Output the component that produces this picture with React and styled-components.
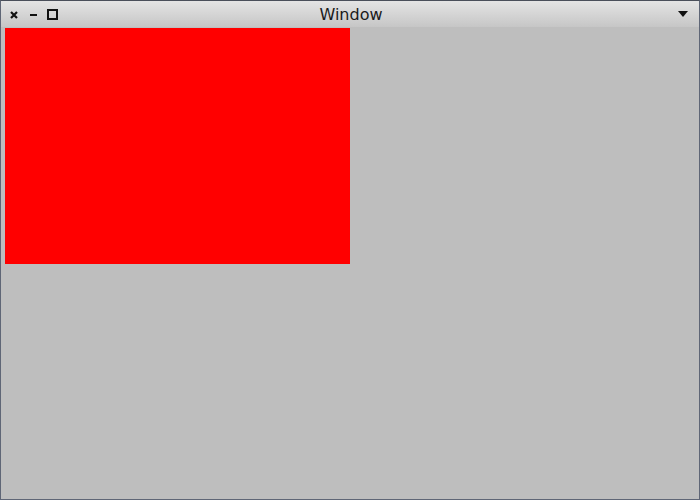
import React from 'react';
import styled, { createGlobalStyle } from 'styled-components';

const Global = createGlobalStyle`
  html, body { margin: 0; padding: 0; background: #bebebe; }
  body { font-family: "DejaVu Sans", "Liberation Sans", sans-serif; }
`;

const Frame = styled.div`
  width: 700px;
  height: 500px;
  box-sizing: border-box;
  border: 1px solid #5f6676;
  border-top-color: #4a4f5a;
  background: #bebebe;
  display: flex;
  flex-direction: column;
`;

const TitleBar = styled.div`
  height: 26px;
  flex: 0 0 auto;
  display: grid;
  grid-template-columns: 1fr auto 1fr;
  align-items: center;
  padding: 0 8px;
  background: linear-gradient(#e4e4e4, #c6c6c6);
`;

const Controls = styled.div`
  display: flex;
  align-items: center;
  gap: 8px;
`;

const Caption = styled.div`
  font-size: 16px;
  color: #1a1a1a;
  padding-left: 2px;
`;

const Menu = styled.div`
  justify-self: end;
  display: flex;
  align-items: center;
  padding-right: 3px;
`;

const Content = styled.div`
  flex: 1;
  padding: 1px 4px;
`;

const RedPanel = styled.div`
  width: 345px;
  height: 236px;
  background: #ff0000;
`;

const Icon = ({ children }) => (
  <svg width="11" height="11" viewBox="0 0 11 11" shapeRendering="crispEdges">
    {children}
  </svg>
);

export default function App() {
  return (
    <>
      <Global />
      <Frame>
        <TitleBar>
          <Controls>
            <Icon>
              <path d="M2 3 L8 9 M8 3 L2 9" stroke="#111" strokeWidth="2.2" shapeRendering="auto" />
            </Icon>
            <Icon>
              <rect x="2" y="5" width="7" height="2" fill="#111" />
            </Icon>
            <Icon>
              <rect x="1" y="1" width="9" height="9" fill="none" stroke="#111" strokeWidth="2" />
            </Icon>
          </Controls>
          <Caption>Window</Caption>
          <Menu>
            <svg width="10" height="6" viewBox="0 0 10 6">
              <path d="M0 0 H10 L5 6 Z" fill="#111" />
            </svg>
          </Menu>
        </TitleBar>
        <Content>
          <RedPanel />
        </Content>
      </Frame>
    </>
  );
}
